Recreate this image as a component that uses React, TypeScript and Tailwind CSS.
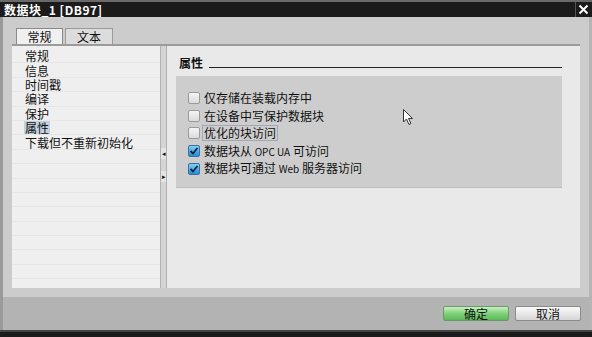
import React from "react";

const font = { fontFamily: '"Noto Sans CJK SC", "Noto Sans", sans-serif' };

function Check({ checked }: { checked: boolean }) {
  return (
    <span
      className={
        "flex h-[12px] w-[12px] shrink-0 items-center justify-center rounded-[2px] border " +
        (checked
          ? "border-[#3a6ea5] bg-gradient-to-b from-[#7fd0f5] to-[#1e8fd0]"
          : "border-[#9a9a9a] bg-gradient-to-b from-[#f4f4f4] to-[#dcdcdc]")
      }
    >
      {checked && (
        <svg width="10" height="10" viewBox="0 0 10 10">
          <path d="M1.5 5 L4 7.5 L8.5 2" stroke="#10223a" strokeWidth="1.8" fill="none" />
        </svg>
      )}
    </span>
  );
}

export default function App() {
  const nav = ["常规", "信息", "时间戳", "编译", "保护", "属性", "下载但不重新初始化"];
  const opts: [React.ReactNode, boolean, boolean][] = [
    ["仅存储在装载内存中", false, false],
    ["在设备中写保护数据块", false, false],
    ["优化的块访问", false, true],
    [
      <>
        数据块从 <span className="text-[10px]">OPC UA</span> 可访问
      </>,
      true,
      false,
    ],
    [
      <>
        数据块可通过 <span className="text-[10px]">Web</span> 服务器访问
      </>,
      true,
      false,
    ],
  ];
  return (
    <div className="relative flex h-[337px] w-[592px] flex-col overflow-hidden bg-[#cccccc] text-[12px] text-[#111]" style={font}>
      {/* title bar */}
      <div className="flex h-[17px] shrink-0 items-center justify-between border-t-2 border-[#6a6a6a] bg-[#1b1b1b] pl-[4px]">
        <span className="text-[12px] font-bold leading-[14px] tracking-[0.5px] text-white">数据块_1 [DB97]</span>
        <span className="mr-[2px] flex h-[15px] w-[15px] items-center justify-center border-l border-[#555]">
          <svg width="11" height="11" viewBox="0 0 11 11">
            <path d="M1.5 1.5 L9.5 9.5 M9.5 1.5 L1.5 9.5" stroke="#fff" strokeWidth="2" />
          </svg>
        </span>
      </div>

      {/* body */}
      <div className="flex flex-1 flex-col border-l-[3px] border-r-[3px] border-l-[#9a9a9a] border-r-[#b5b5b5]">
        <div className="flex flex-1 flex-col pl-[9px] pr-[9px] pt-[11px]">
          {/* tabs */}
          <div className="flex h-[16px] gap-[2px] pl-[4px]">
            <div className="flex w-[47px] items-center justify-center border border-b-0 border-[#8a8a8a] bg-[#f0f0f0] text-[12px] leading-[14px]">常规</div>
            <div className="flex w-[48px] items-center justify-center border border-b-0 border-[#9a9a9a] bg-[#dcdcdc] text-[12px] leading-[14px]">文本</div>
          </div>
          {/* content */}
          <div className="flex h-[244px] border-t-2 border-[#9b9b9b]">
            {/* nav */}
            <div className="flex w-[148px] flex-col bg-[#efefef] pt-[3px]">
              {nav.map((n, i) => (
                <div key={n} className="flex h-[14.4px] items-center border-b border-[#e6e6e6] pl-[12px]">
                  <span className={"leading-[13px] " + (i === 5 ? "bg-[#c3d1df] px-[1px]" : "px-[1px]")}>{n}</span>
                </div>
              ))}
              {Array.from({ length: 9 }).map((_, i) => (
                <div key={i} className="h-[14.4px] border-b border-[#e6e6e6]" />
              ))}
            </div>
            {/* splitter */}
            <div className="flex w-[7px] flex-col border-l border-r border-[#b0b0b0] bg-[#d4d4d4]">
              <div className="h-[102px]" />
              <div className="flex h-[11px] items-center justify-start bg-[#e4e4e4] pl-[1px] text-[7px] leading-none">◂</div>
              <div className="h-[12px]" />
              <div className="flex h-[11px] items-center justify-start bg-[#e4e4e4] pl-[1px] text-[7px] leading-none">▸</div>
            </div>
            {/* right pane */}
            <div className="flex flex-1 flex-col bg-[#e9e9e9] pl-[9px] pr-[18px] pt-[10px]">
              <div className="flex h-[14px] items-end gap-[6px] pl-[3px]">
                <span className="font-bold leading-[14px]">属性</span>
                <div className="mb-[2px] flex-1 border-b border-[#222]" />
              </div>
              <div className="mt-[6px] flex h-[112px] flex-col gap-[3.7px] border-b border-[#bdbdbd] bg-[#cdcdcd] pl-[12px] pt-[15px]">
                {opts.map(([label, c, focus], i) => (
                  <div key={i} className="flex h-[14px] items-center gap-[3px]">
                    <Check checked={c} />
                    <span className={"leading-[14px] " + (focus ? "px-[1px] outline outline-1 outline-[#a0a8b8]" : "px-[1px]")}>{label}</span>
                  </div>
                ))}
              </div>
            </div>
          </div>
        </div>
        {/* footer */}
        <div className="mt-[9px] flex h-[33px] items-center justify-end gap-[6px] bg-[#b3b3b3] pr-[8px]">
          <button className="flex h-[15px] w-[66px] items-center justify-center rounded-[2px] border border-[#6a9a6a] bg-gradient-to-b from-[#c8f0c0] via-[#7fd17a] to-[#5cb857] text-[12px] leading-[13px]">确定</button>
          <button className="flex h-[15px] w-[66px] items-center justify-center rounded-[2px] border border-[#8a8a8a] bg-gradient-to-b from-[#fafafa] to-[#d6d6d6] text-[12px] leading-[13px]">取消</button>
        </div>
      </div>
      <div className="h-[8px] shrink-0 border-t-2 border-[#444] bg-[#1b1b1b]" />

      {/* mouse cursor */}
      <svg className="absolute left-[403px] top-[109px]" width="12" height="17" viewBox="0 0 12 17">
        <path d="M0.5 0.5 L0.5 13 L3.5 10 L6 15.5 L8 14.5 L5.5 9.5 L9.5 9.5 Z" fill="#fff" stroke="#333" strokeWidth="1" />
      </svg>
    </div>
  );
}
